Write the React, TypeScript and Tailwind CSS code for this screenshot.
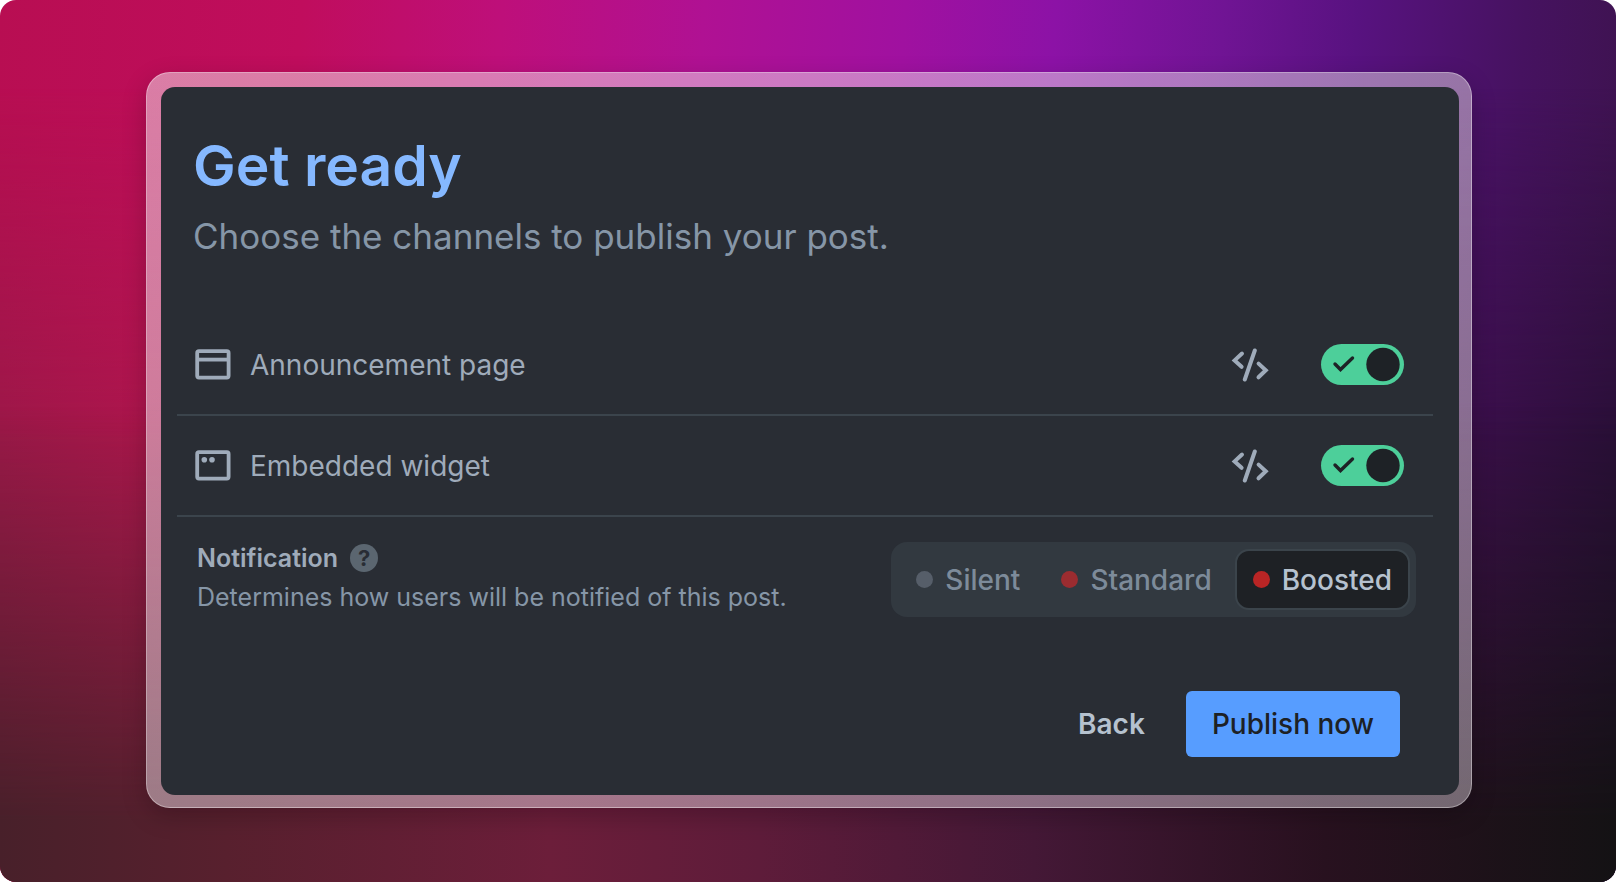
import { useState } from "react";

const channels = [
  { id: "page", label: "Announcement page" },
  { id: "widget", label: "Embedded widget" },
];

const levels = [
  { id: "silent", label: "Silent", dot: "bg-[#565e69]" },
  { id: "standard", label: "Standard", dot: "bg-[#9b2c30]" },
  { id: "boosted", label: "Boosted", dot: "bg-[#b92525]" },
];

function WindowIcon({ kind }: { kind: string }) {
  return (
    <svg width="36" height="32" viewBox="0 0 36 32" fill="none" stroke="currentColor" aria-hidden="true">
      <rect x="2.2" y="2.2" width="31.4" height="26.4" rx="1.8" strokeWidth="3.8" />
      {kind === "page" ? (
        <path d="M3 10.6h30" strokeWidth="3.8" />
      ) : (
        <g fill="currentColor" stroke="none">
          <circle cx="9.3" cy="9.8" r="2.8" />
          <circle cx="17" cy="9.8" r="2.8" />
        </g>
      )}
    </svg>
  );
}

function CodeIcon() {
  return (
    <svg width="38" height="34" viewBox="0 0 38 34" fill="none" stroke="currentColor" strokeWidth="4" strokeLinecap="round" aria-hidden="true">
      <path d="M23.8 2.5L13.8 31.5" />
      <path d="M11 5.5L3.6 12.4L10.6 18.8M27.6 15.6L34.8 22.2L27.5 29.3" />
    </svg>
  );
}

function Toggle({ id, label }: { id: string; label: string }) {
  const [on, setOn] = useState(true);
  return (
    <span className="relative block h-[41px] w-[83px]">
      <input
        id={id}
        type="checkbox"
        role="switch"
        aria-label={label}
        checked={on}
        onChange={() => setOn(!on)}
        className="block h-full w-full cursor-pointer appearance-none rounded-full bg-[#5c666f] checked:bg-[#4dcf9a]"
      />
      <svg className="pointer-events-none absolute inset-0" width="83" height="41" viewBox="0 0 83 41" fill="none" aria-hidden="true">
        {on && <path d="M14 20L19.5 25.5L31.5 14" stroke="#1e2226" strokeWidth="3.4" strokeLinecap="round" strokeLinejoin="miter" />}
        <circle cx={on ? 62 : 21} cy="20.5" r="16.7" fill="#1e2226" />
      </svg>
    </span>
  );
}

function Backdrop() {
  return (
    <div className="absolute inset-0 -z-10 overflow-hidden" aria-hidden="true">
      <div className="absolute inset-0 bg-[linear-gradient(94deg,#b80e52_0%,#c00d5d_18%,#be0f7a_30%,#b01193_42%,#a011a0_54%,#8c12a6_63%,#701494_73%,#581280_81%,#461260_91%,#3b134a_100%)]" />
      <div className="absolute inset-0 bg-[linear-gradient(90deg,#9c1848_0%,#ac164c_9%,#8a1060_50%,#3b0f4b_91%,#2a0f38_100%)] [mask-image:linear-gradient(180deg,transparent_10%,#000_50%)]" />
      <div className="absolute inset-0 bg-[linear-gradient(90deg,#48202a_0%,#58202e_14%,#6c1e3a_34%,#5e1c3a_47%,#441836_64%,#28111f_82%,#141214_100%)] [mask-image:linear-gradient(180deg,transparent_46%,#000_93%)]" />
    </div>
  );
}

export default function App() {
  const [level, setLevel] = useState("boosted");
  return (
    <main className="relative isolate min-h-screen overflow-hidden rounded-2xl pt-[72px] pr-36 pb-[72px] pl-[146px] font-['Inter',sans-serif] text-[#9fabba]">
      <Backdrop />
      <section className="rounded-3xl border border-white/35 bg-linear-to-br from-[#f8eef4]/50 to-[#dcd4dc]/45 pt-[14px] pr-3 pb-3 pl-[14px] shadow-[0_8px_24px_rgba(0,0,0,0.22)]">
        <div className="rounded-[14px] bg-[#292d34] px-4 pt-[47px] pb-[38px]">
          <header className="px-4">
            <h1 className="text-[57px] leading-[64px] font-semibold text-[#85b8ff]">Get ready</h1>
            <p className="mt-[14px] text-[35px] leading-[48px] text-[#8696a7]">Choose the channels to publish your post.</p>
          </header>

          <ul className="mt-[55px] mr-[10px]">
            {channels.map((c) => (
              <li key={c.id} className="flex h-[101px] items-center border-b-2 border-[#3b444c] pr-[29px] pl-[18px]">
                <WindowIcon kind={c.id} />
                <label htmlFor={c.id} className="ml-[19px] text-[28px] leading-9">{c.label}</label>
                <button type="button" aria-label={`Embed code for ${c.label}`} className="mr-[52px] ml-auto">
                  <CodeIcon />
                </button>
                <Toggle id={c.id} label={c.label} />
              </li>
            ))}
          </ul>

          <div className="mt-[25px] mr-[27px] ml-5 flex items-start justify-between">
            <div>
              <h2 className="flex items-center gap-3 text-[25px] leading-8 font-semibold">
                Notification
                <button type="button" aria-label="About notifications" className="flex size-7 items-center justify-center rounded-full bg-[#5b6670] text-[22px] font-bold text-[#292d34]">
                  ?
                </button>
              </h2>
              <p className="mt-[7px] text-[25px] leading-8 text-[#8696a7]">Determines how users will be notified of this post.</p>
            </div>
            <div role="radiogroup" aria-label="Notification level" className="flex h-[75px] items-center gap-[5px] rounded-2xl bg-[#323940] py-[6px] pr-[6px] pl-[7px]">
              {levels.map((l) => (
                <label
                  key={l.id}
                  className="flex h-[61px] cursor-pointer items-center gap-3 rounded-[14px] border-2 border-transparent px-4 text-[28px] leading-9 font-medium text-[#7d8b9a] has-checked:border-[#3b444b] has-checked:bg-[#1e2125] has-checked:text-[#b6c2cf]"
                >
                  <input
                    type="radio"
                    name="level"
                    checked={level === l.id}
                    onChange={() => setLevel(l.id)}
                    className={`size-[17px] cursor-pointer appearance-none rounded-full ${l.dot}`}
                  />
                  {l.label}
                </label>
              ))}
            </div>
          </div>

          <div className="mt-[74px] mr-[43px] flex justify-end gap-[17px] text-[28px] leading-9">
            <button type="button" className="h-[66px] px-6 font-semibold text-[#b6c2cf]">Back</button>
            <button type="button" className="h-[66px] rounded-md bg-[#579dff] px-[26px] font-medium text-[#1d2125]">Publish now</button>
          </div>
        </div>
      </section>
    </main>
  );
}
